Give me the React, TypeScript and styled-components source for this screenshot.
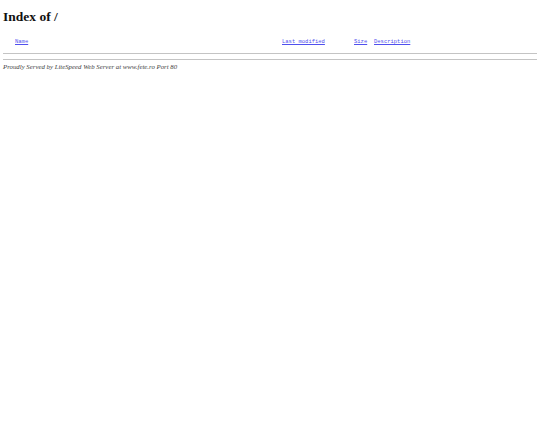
import styled, { createGlobalStyle } from "styled-components";

const GlobalStyle = createGlobalStyle`
  html, body {
    margin: 0;
    padding: 0;
    background: #ffffff;
  }
  body {
    padding: 0 3px;
    font-family: "Liberation Serif", "Times New Roman", serif;
    color: #000;
  }
`;

const Title = styled.h1`
  font-family: "Liberation Serif", "Times New Roman", serif;
  font-size: 13.5px;
  font-weight: bold;
  margin: 0;
  padding-top: 9px;
  line-height: 16px;
  color: #111;
`;

const Listing = styled.div`
  display: flex;
  align-items: baseline;
  margin-top: 13px;
  padding-left: 12px;
  font-family: "Liberation Mono", "Courier New", monospace;
  font-size: 5.5px;
  line-height: 7px;
`;

const HeadLink = styled.a<{ $w?: number }>`
  color: #5050ee;
  text-decoration: underline;
  flex: none;
  width: ${(p) => (p.$w ? `${p.$w}px` : "auto")};
`;

const Rule = styled.hr<{ $top: number }>`
  border: none;
  border-top: 1px solid #c4c4c4;
  margin: ${(p) => p.$top}px 0 0 0;
  height: 0;
`;

const Address = styled.address`
  font-family: "Liberation Serif", "Times New Roman", serif;
  font-style: italic;
  font-size: 6.8px;
  line-height: 8px;
  margin-top: 3px;
  color: #444;
`;

export default function App() {
  return (
    <>
      <GlobalStyle />
      <Title>Index of /</Title>
      <Listing>
        <HeadLink href="#" $w={267}>Name</HeadLink>
        <HeadLink href="#" $w={72}>Last modified</HeadLink>
        <HeadLink href="#" $w={20}>Size</HeadLink>
        <HeadLink href="#">Description</HeadLink>
      </Listing>
      <Rule $top={8} />
      <Rule $top={5} />
      <Address>Proudly Served by LiteSpeed Web Server at www.fete.ro Port 80</Address>
    </>
  );
}
